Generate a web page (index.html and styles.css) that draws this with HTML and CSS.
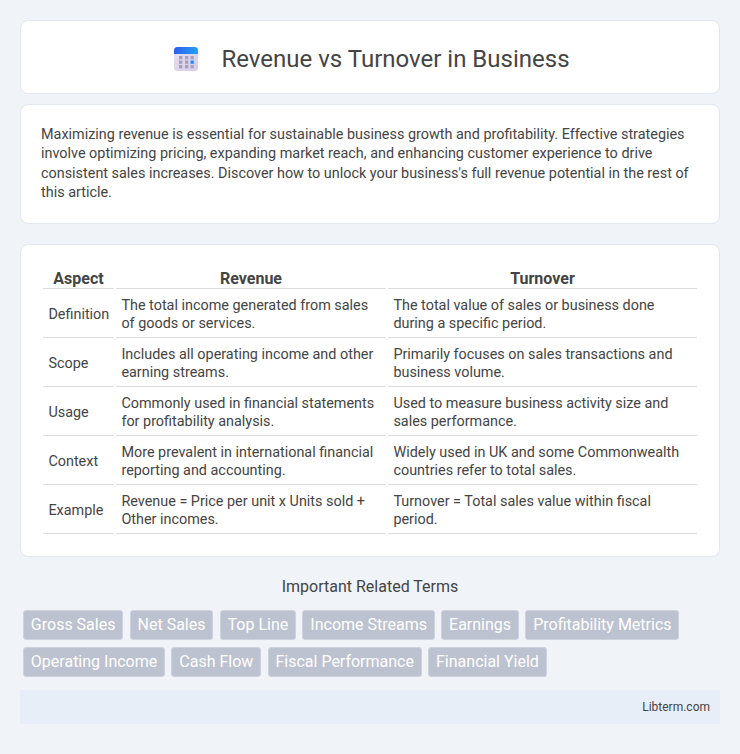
FILE: index.html
```html
<!DOCTYPE html>
<html lang="en">
<head>
<meta charset="utf-8">
<title>Revenue vs Turnover in Business</title>
<link rel="stylesheet" href="styles.css">
</head>
<body>
<header class="card title-card">
  <svg class="logo" viewBox="0 0 24 24" width="24" height="24" aria-hidden="true">
    <defs>
      <linearGradient id="top" x1="0" y1="0" x2="1" y2="0"><stop offset="0" stop-color="#2f5fe8"/><stop offset="1" stop-color="#1fa0fb"/></linearGradient>
      <linearGradient id="pg" x1="0" y1="0" x2="1" y2="1"><stop offset="0" stop-color="#e6e2f1"/><stop offset="1" stop-color="#d6cbe7"/></linearGradient>
    </defs>
    <rect x="0" y="0" width="24" height="24" rx="3.5" fill="url(#pg)"/>
    <path d="M0 7V3.5A3.5 3.5 0 0 1 3.5 0h17A3.5 3.5 0 0 1 24 3.5V7z" fill="url(#top)"/>
    <g fill="#a79fbb">
      <rect x="5" y="9" width="3.3" height="3.3"/><rect x="11" y="9" width="3.3" height="3.3"/><rect x="16.5" y="9" width="3.3" height="3.3"/>
      <rect x="5" y="13.5" width="3.3" height="3.3"/><rect x="11" y="13.5" width="3.3" height="3.3"/>
      <rect x="5" y="18" width="3.3" height="3.3"/><rect x="11" y="18" width="3.3" height="3.3"/><rect x="16.5" y="18" width="3.3" height="3.3"/>
    </g>
    <rect x="16.5" y="13.5" width="3.3" height="3.3" fill="#1f8ff5"/>
  </svg>
  <h1>Revenue vs Turnover in Business</h1>
</header>
<section class="card intro-card">
  <p>Maximizing revenue is essential for sustainable business growth and profitability. Effective strategies involve optimizing pricing, expanding market reach, and enhancing customer experience to drive consistent sales increases. Discover how to unlock your business's full revenue potential in the rest of this article.</p>
</section>
<section class="card table-card">
  <table>
    <thead>
      <tr><th class="c1">Aspect</th><th class="c2">Revenue</th><th class="c3">Turnover</th></tr>
    </thead>
    <tbody>
      <tr><td>Definition</td><td>The total income generated from sales of goods or services.</td><td>The total value of sales or business done during a specific period.</td></tr>
      <tr><td>Scope</td><td>Includes all operating income and other earning streams.</td><td>Primarily focuses on sales transactions and business volume.</td></tr>
      <tr><td>Usage</td><td>Commonly used in financial statements for profitability analysis.</td><td>Used to measure business activity size and sales performance.</td></tr>
      <tr><td>Context</td><td>More prevalent in international financial reporting and accounting.</td><td>Widely used in UK and some Commonwealth countries refer to total sales.</td></tr>
      <tr><td>Example</td><td>Revenue = Price per unit x Units sold + Other incomes.</td><td>Turnover = Total sales value within fiscal period.</td></tr>
    </tbody>
  </table>
</section>
<section class="terms">
  <h2>Important Related Terms</h2>
  <div class="tags">
    <span class="tag">Gross Sales</span><span class="tag">Net Sales</span><span class="tag">Top Line</span><span class="tag">Income Streams</span><span class="tag">Earnings</span><span class="tag">Profitability Metrics</span><span class="tag">Operating Income</span><span class="tag">Cash Flow</span><span class="tag">Fiscal Performance</span><span class="tag">Financial Yield</span>
  </div>
</section>
<footer class="footer">Libterm.com</footer>
</body>
</html>
```
FILE: styles.css
```css
* { box-sizing: border-box; }
html, body { margin: 0; padding: 0; }
body {
  background: #f0f4f9;
  font-family: Roboto, "Liberation Sans", sans-serif;
  color: #444;
  padding: 20px;
  height: 754px;
  overflow: hidden;
}
.card {
  background: #fff;
  border: 1px solid #e2e6f0;
  border-radius: 8px;
}
.title-card {
  height: 74px;
  display: flex;
  align-items: center;
  justify-content: center;
  gap: 23px;
  margin-bottom: 10px;
  padding: 3px 0 0 4px;
}
.logo { flex: none; }
h1 {
  margin: 0;
  font-size: 24px;
  font-weight: 400;
  color: #444;
}
.intro-card {
  height: 120px;
  padding: 20px;
  margin-bottom: 20px;
}
.intro-card p {
  margin: 0;
  font-size: 14.4px;
  line-height: 19.4px;
  color: #444;
}
.table-card {
  height: 313px;
  padding: 20px;
  margin-bottom: 20px;
}
table {
  width: 100%;
  table-layout: fixed;
  border-collapse: separate;
  border-spacing: 2px;
  font-size: 14.4px;
  line-height: 18px;
}
th {
  font-weight: 700;
  text-align: center;
  padding: 2px 5px 0;
  height: 22px;
  line-height: 18px;
  border-bottom: 1px solid #ddd;
  font-size: 16px;
}
td {
  padding: 6px 5px 4px 5.4px;
  height: 47px;
  border-bottom: 1px solid #ddd;
  vertical-align: middle;
}
.c1 { width: 71px; }
.c2 { width: 270px; }
.terms { margin-bottom: 13px; }
h2 {
  margin: 0 0 14px;
  font-size: 16px;
  line-height: 19px;
  font-weight: 400;
  text-align: center;
  color: #444;
}
.tags {
  display: flex;
  flex-wrap: wrap;
  gap: 7px 6.4px;
  padding-left: 3px;
}
.tag {
  background: #bcc2cf;
  border: 1px solid #cdd2dc;
  border-radius: 3px;
  color: #fff;
  font-size: 16px;
  line-height: 28px;
  height: 30px;
  padding: 0 6.85px;
}
.footer {
  height: 34px;
  background: #e8eef8;
  font-size: 12px;
  line-height: 34px;
  text-align: right;
  padding-right: 10px;
  color: #444;
}
```
